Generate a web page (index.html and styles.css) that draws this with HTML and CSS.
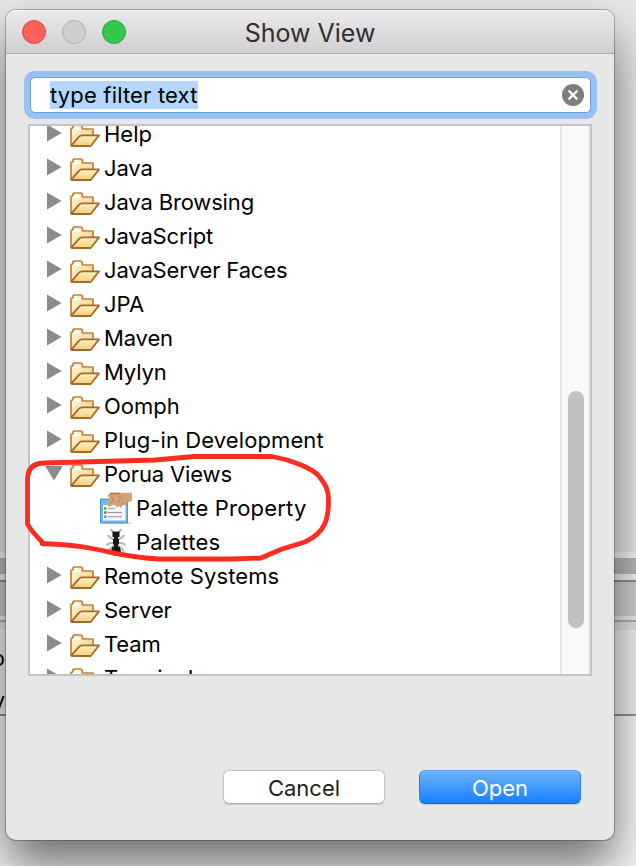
FILE: index.html
```html
<!DOCTYPE html>
<html lang="en">
<head>
<meta charset="utf-8">
<title>Show View</title>
<link rel="stylesheet" href="styles.css">
</head>
<body>
<svg class="defs" width="0" height="0" aria-hidden="true">
  <defs>
    <linearGradient id="back" x1="0" y1="0" x2="1" y2="1"><stop offset="0" stop-color="#fffdf0"/><stop offset=".45" stop-color="#f8e3ae"/><stop offset="1" stop-color="#edc980"/></linearGradient>
    <linearGradient id="front" x1="0" y1="0" x2="0" y2="1"><stop offset="0" stop-color="#fff0c6"/><stop offset="1" stop-color="#f5ce7c"/></linearGradient>
    <symbol id="folder" viewBox="0 0 30 23">
      <path d="M1 21V4.6L3 3.8V2L4.1 1H11L12.3 2.2V5H23V11.5L20 21Z" fill="url(#back)" stroke="#bf823d" stroke-width="1.7" stroke-linejoin="round"/>
      <path d="M3 5H10.5" stroke="#fff" stroke-width="2"/>
      <path d="M1.2 21.6L9.2 12.6Q10.6 11.4 12.5 11.4H29L20.8 22H1.8Z" fill="url(#front)" stroke="#a56a2a" stroke-width="1.8" stroke-linejoin="round"/>
    </symbol>
    <symbol id="closed" viewBox="0 0 15 18"><path d="M0 .4L14.7 9 0 17.6Z" fill="#8b8b8b"/></symbol>
  </defs>
</svg>
<div class="backdrop">
  <div class="pane top"></div><div class="b1"></div><div class="b2"></div><div class="b3"></div><div class="b4"></div><div class="b5"></div><div class="b6"></div><div class="b7"></div>
  <div class="pane editor"><span>o</span><span>ny</span></div>
  <div class="pane end"></div>
</div>
<main class="dialog">
  <header class="titlebar">
    <div class="lights"><i class="red"></i><i class="gray"></i><i class="green"></i></div>
    <h1>Show View</h1>
  </header>
  <div class="filter"><span>type filter text</span>
    <svg width="22" height="22" viewBox="0 0 22 22"><circle cx="11" cy="11" r="11" fill="#7e7e7e"/><path d="M6.6 6.6l8.8 8.8M15.4 6.6l-8.8 8.8" stroke="#fff" stroke-width="2.2"/></svg>
  </div>
  <div class="tree">
    <ul>
      <li><svg class="arrow"><use href="#closed"/></svg><svg class="folder"><use href="#folder"/></svg><span>Help</span></li>
      <li><svg class="arrow"><use href="#closed"/></svg><svg class="folder"><use href="#folder"/></svg><span class="tight">Java</span></li>
      <li><svg class="arrow"><use href="#closed"/></svg><svg class="folder"><use href="#folder"/></svg><span class="tight">Java Browsing</span></li>
      <li><svg class="arrow"><use href="#closed"/></svg><svg class="folder"><use href="#folder"/></svg><span class="tight">JavaScript</span></li>
      <li><svg class="arrow"><use href="#closed"/></svg><svg class="folder"><use href="#folder"/></svg><span class="tight">JavaServer Faces</span></li>
      <li><svg class="arrow"><use href="#closed"/></svg><svg class="folder"><use href="#folder"/></svg><span>JPA</span></li>
      <li><svg class="arrow"><use href="#closed"/></svg><svg class="folder"><use href="#folder"/></svg><span class="tight">Maven</span></li>
      <li><svg class="arrow"><use href="#closed"/></svg><svg class="folder"><use href="#folder"/></svg><span class="tight">Mylyn</span></li>
      <li><svg class="arrow"><use href="#closed"/></svg><svg class="folder"><use href="#folder"/></svg><span>Oomph</span></li>
      <li><svg class="arrow"><use href="#closed"/></svg><svg class="folder"><use href="#folder"/></svg><span class="loose">Plug-in Development</span></li>
      <li><svg class="arrow open" viewBox="0 0 18 15"><path d="M.2 0H17.8L9 14.6Z" fill="#8b8b8b"/></svg><svg class="folder"><use href="#folder"/></svg><span class="tight">Porua Views</span></li>
      <li class="child">
        <svg class="view" viewBox="0 0 32 32">
          <path d="M2 30H31V32H2Z" fill="#ddd"/><path d="M.5 7H27.5V31H.5Z" fill="#79b6e8" stroke="#4d91cc"/><path d="M3 13H25.5V28.5H3Z" fill="#f4f8fc"/>
          <path d="M4 16.5H6.5" stroke="#28b33c" stroke-width="2.4"/><path d="M4 20.5H6.5" stroke="#c34d5e" stroke-width="2.4"/><path d="M4 24.7H6.5" stroke="#5a8bff" stroke-width="2.4"/>
          <path d="M8 16.5H15" stroke="#9bb49d" stroke-width="1.2"/><path d="M8 20.5H22" stroke="#bd8994" stroke-width="1.2"/><path d="M8 24.7H22" stroke="#87a5dc" stroke-width="1.2"/>
          <path d="M32 .7H20L16 1.3 9 1.6 7.5 4 10 6 7 12 8.5 15 11 14 15 11 16.5 15.5 19 14 20.5 16 23 13 27 10.5 32 9Z" fill="#d6a274"/><path d="M10 1.5H20" stroke="#b8763e" stroke-width="1.6"/><path d="M11 5L14 7 10 12M17 11L20 8M21 14L24 10M18 4L22 6" fill="none" stroke="#b8804f" stroke-width="1"/>
        </svg><span class="loose">Palette Property</span></li>
      <li class="child">
        <svg class="view" viewBox="0 0 32 32">
          <path d="M10.5 3L14 7.5M21.5 3L18 7.5M15 14L10 11.5 7.5 9M17 14L22 11.5 24.5 9M15 17H10L6.5 19M17 17H22L25.5 19M14 20L9.5 23 8 28M18 20L22.5 23 24 28" fill="none" stroke="#bababa" stroke-width="2.2"/>
          <path d="M12.5 5.5H19.5V11H18V13H19V18.5H18V20.5H19.5L21 25 19 29.5H13L11 25 12.5 20.5H14V18.5H13V13H14V11H12.5Z" fill="#181818"/>
        </svg><span class="loose">Palettes</span></li>
      <li><svg class="arrow"><use href="#closed"/></svg><svg class="folder"><use href="#folder"/></svg><span class="loose">Remote Systems</span></li>
      <li><svg class="arrow"><use href="#closed"/></svg><svg class="folder"><use href="#folder"/></svg><span class="tight">Server</span></li>
      <li><svg class="arrow"><use href="#closed"/></svg><svg class="folder"><use href="#folder"/></svg><span class="tight">Team</span></li>
      <li><svg class="arrow"><use href="#closed"/></svg><svg class="folder"><use href="#folder"/></svg><span>Terminal</span></li>
    </ul>
    <div class="scroll"><div class="thumb"></div></div>
  </div>
  <footer><button>Cancel</button><button class="primary">Open</button></footer>
</main>
<svg class="annotation" width="636" height="866" viewBox="0 0 636 866"><path d="M44 544C35 535 30 529 27.5 524V479C28 468 34 463 44 463L155 460 194 456.5H272C292 460 311 468 318 475C326 485 328.5 490 328.5 500C328.5 518 326 532 305 542L282 549 261 558 230 559H160C128 558 108 551 92 548.5C75 545 59 544 42 543.5" fill="none" stroke="#fc2d20" stroke-width="4.8" stroke-linecap="round" stroke-linejoin="round"/></svg>
</body>
</html>
```
FILE: styles.css
```css
* { box-sizing: border-box; }
body { margin: 0; width: 636px; height: 866px; overflow: hidden; position: relative; font-family: Inter, "Liberation Sans", sans-serif; font-size: 22px; color: #000; }
.defs, .backdrop, .annotation { position: absolute; left: 0; top: 0; }
.backdrop { width: 636px; height: 866px; display: flex; flex-direction: column; background: #eaeaea; }
.top { height: 552px; background: #e7e7e7; }
.b1 { height: 6px; background: #f6f6f6; }
.b2 { height: 16px; background: #b9b9b9; }
.b3 { height: 6px; background: #f1f1f1; }
.b4 { height: 2px; background: #929292; }
.b5 { height: 34px; background: #cecece; }
.b6 { height: 6px; background: #ededed; border-bottom: 2px solid #b1b1ae; }
.b7 { height: 10px; background: #e4e4e4; border-bottom: 2px solid #f5f5f5; }
.editor { height: 84px; background: #f0f0f0; border-bottom: 2px solid #929292; display: flex; flex-direction: column; align-items: flex-end; width: 100%; padding: 5px 631px 0 0; line-height: 42px; }
.editor span { height: 42px; }
.end { flex: 1; background: #f6f6f6; }
.dialog { position: relative; width: 608px; height: 830px; margin: 10px 0 0 6px; background: #e7e7e7; border-radius: 10px; display: flex; flex-direction: column; box-shadow: 0 0 0 1px rgba(0,0,0,.25), 0 26px 48px rgba(0,0,0,.55); }
.titlebar { height: 44px; flex: none; display: grid; grid-template-columns: 120px 1fr 120px; align-items: center; background: linear-gradient(#ebe9eb, #d2cfd2); border-bottom: 1px solid #afadaf; box-shadow: inset 0 1px #f7f6f7; border-radius: 10px 10px 0 0; }
.lights { display: flex; gap: 16px; padding-left: 16px; }
.lights i { width: 24px; height: 24px; border-radius: 50%; border: 1px solid; }
.lights .red { background: #fc605b; border-color: #df4744; }
.lights .gray { background: #cfcfcf; border-color: #b1b1b1; }
.lights .green { background: #34c84a; border-color: #24aa35; }
h1 { margin: 2px 0 0; text-align: center; font-size: 25px; line-height: 40px; font-weight: 400; color: #303030; }
.filter { flex: none; height: 36px; margin: 23px 23px 0 24px; background: #fff; border: 1px solid #6da0da; border-radius: 5px; box-shadow: 0 0 0 6px #96c1f0; padding: 0 6px 0 19px; display: flex; align-items: center; justify-content: space-between; }
.filter span { background: #b3d7ff; line-height: 29px; height: 28px; letter-spacing: .17px; }
.tree { position: relative; flex: none; width: 564px; height: 552px; margin: 11px 0 0 22px; border: 2px solid #c3c3c3; background: #fff; display: flex; overflow: hidden; }
ul { list-style: none; flex: 1; margin: -9px 0 0; padding: 0; }
li { height: 34px; display: flex; align-items: center; padding-left: 17px; white-space: nowrap; }
.tight { letter-spacing: -.15px; }
.loose { letter-spacing: .1px; }
.child .loose { letter-spacing: .2px; }
.arrow { width: 15px; height: 18px; margin: -2px 8px 0 0; flex: none; }
.arrow.open { width: 18px; height: 15px; margin: -2px 7px 0 -2px; }
.folder { width: 30px; height: 23px; margin: 2px 4px 0 0; flex: none; }
.child { padding-left: 70px; }
.view { width: 32px; height: 32px; margin-right: 4px; flex: none; }
.scroll { width: 30px; height: 548px; background: #fafafa; border-left: 2px solid #e8e8e8; border-right: 2px solid #ededed; padding: 265px 0 0 6px; }
.thumb { width: 16px; height: 237px; border-radius: 8px; background: #c1c1c1; }
footer { display: flex; justify-content: flex-end; gap: 34px; margin: 94px 33px 0 0; }
button { width: 162px; height: 34px; padding: 2px 0 0; border: 1px solid #c4c4c4; border-bottom-color: #adadad; border-radius: 6px; background: #fff; color: #222; font: inherit; line-height: 30px; box-shadow: 0 1px 1px rgba(0,0,0,.12); }
.primary { color: #fff; background: linear-gradient(#6db3f9, #1580ff); border-color: #56a0ed #2780ed #1269df; }
```
